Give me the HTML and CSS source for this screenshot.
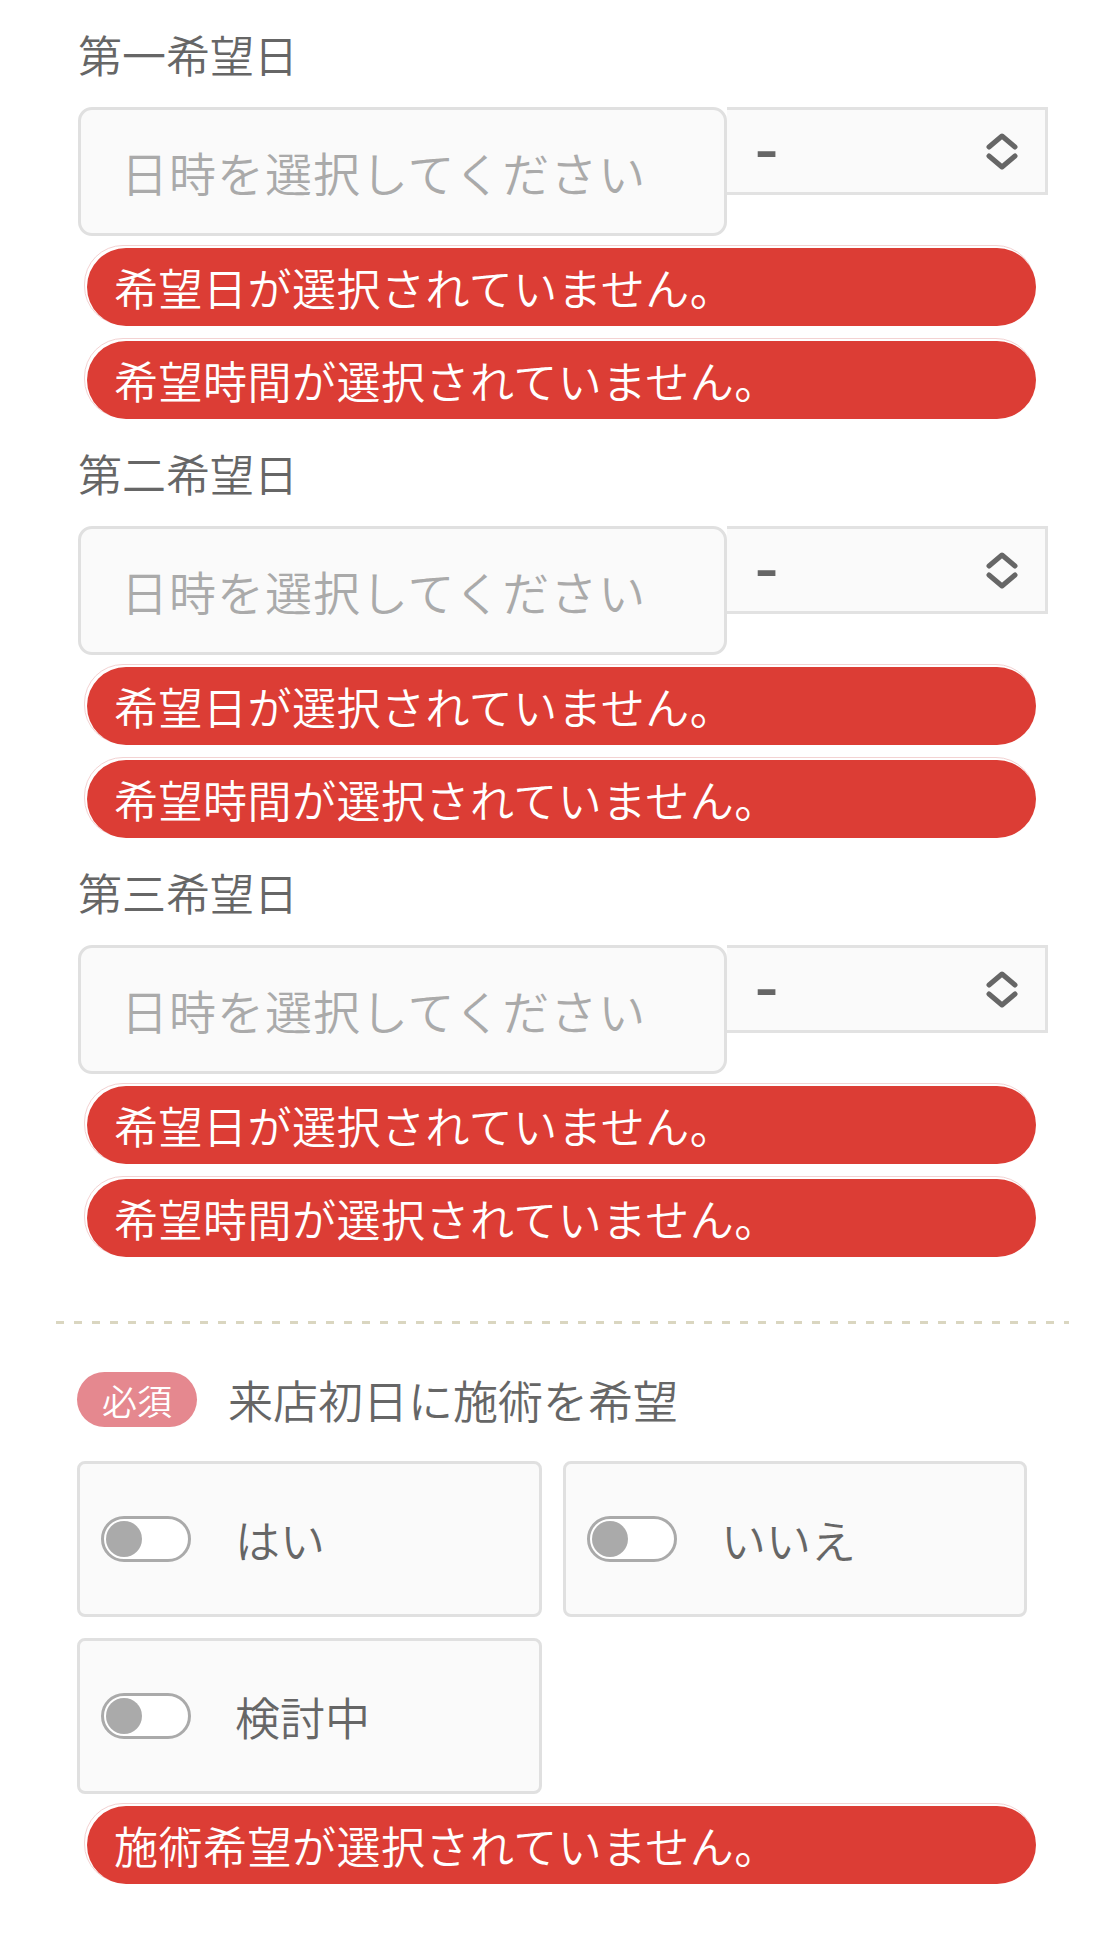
FILE: index.html
```html
<!DOCTYPE html>
<html lang="ja">
<head>
<meta charset="utf-8">
<title>希望日フォーム</title>
<link rel="stylesheet" href="styles.css">
</head>
<body>
<div class="form">
  <section class="date-field">
    <div class="field-label">第一希望日</div>
    <div class="input-row">
      <div class="date-input">日時を選択してください</div>
      <div class="time-select">
        <span class="select-value">-</span>
        <svg class="chevrons" width="32" height="37" viewBox="0 0 32 37"><path d="M3 14 L16 3 L29 14 M3 23 L16 34 L29 23" fill="none" stroke="#666" stroke-width="5" stroke-linecap="round" stroke-linejoin="round"/></svg>
      </div>
    </div>
    <div class="error-pill first">希望日が選択されていません。</div>
    <div class="error-pill">希望時間が選択されていません。</div>
  </section>

  <section class="date-field">
    <div class="field-label">第二希望日</div>
    <div class="input-row">
      <div class="date-input">日時を選択してください</div>
      <div class="time-select">
        <span class="select-value">-</span>
        <svg class="chevrons" width="32" height="37" viewBox="0 0 32 37"><path d="M3 14 L16 3 L29 14 M3 23 L16 34 L29 23" fill="none" stroke="#666" stroke-width="5" stroke-linecap="round" stroke-linejoin="round"/></svg>
      </div>
    </div>
    <div class="error-pill first">希望日が選択されていません。</div>
    <div class="error-pill">希望時間が選択されていません。</div>
  </section>

  <section class="date-field">
    <div class="field-label">第三希望日</div>
    <div class="input-row">
      <div class="date-input">日時を選択してください</div>
      <div class="time-select">
        <span class="select-value">-</span>
        <svg class="chevrons" width="32" height="37" viewBox="0 0 32 37"><path d="M3 14 L16 3 L29 14 M3 23 L16 34 L29 23" fill="none" stroke="#666" stroke-width="5" stroke-linecap="round" stroke-linejoin="round"/></svg>
      </div>
    </div>
    <div class="error-pill first">希望日が選択されていません。</div>
    <div class="error-pill">希望時間が選択されていません。</div>
  </section>

  <hr class="separator">

  <section class="choice-field">
    <div class="choice-title">
      <span class="required-badge">必須</span>
      <span class="choice-label">来店初日に施術を希望</span>
    </div>
    <div class="choice-grid">
      <div class="choice-card"><span class="toggle"><span class="knob"></span></span><span class="choice-text">はい</span></div>
      <div class="choice-card"><span class="toggle"><span class="knob"></span></span><span class="choice-text">いいえ</span></div>
      <div class="choice-card"><span class="toggle"><span class="knob"></span></span><span class="choice-text">検討中</span></div>
    </div>
    <div class="error-pill first">施術希望が選択されていません。</div>
  </section>
</div>
</body>
</html>
```

FILE: styles.css
```css
* {
  box-sizing: border-box;
}

body {
  margin: 0;
  background: #ffffff;
  font-family: "Noto Sans CJK JP", "Noto Sans", sans-serif;
  font-weight: 350;
  color: #666666;
}

.form {
  width: 1110px;
}

.date-field {
  display: flex;
  flex-direction: column;
}

.field-label {
  margin: 24px 0 23px 78px;
  font-size: 44px;
  line-height: 60px;
  color: #666666;
}

.input-row {
  display: flex;
  align-items: flex-start;
  margin-left: 78px;
}

.date-input {
  width: 649px;
  height: 129px;
  border: 3px solid #e0e0e0;
  border-radius: 14px;
  background: #fafafa;
  padding-left: 40px;
  font-size: 47px;
  line-height: 123px;
  color: #aaaaaa;
  letter-spacing: 1px;
}

.time-select {
  width: 321px;
  height: 88px;
  border: 3px solid #e2e2e2;
  border-left: none;
  background: #fafafa;
  display: flex;
  align-items: center;
  justify-content: space-between;
  padding: 0 27px 0 28px;
}

.select-value {
  display: inline-block;
  font-family: "Liberation Sans", sans-serif;
  font-weight: 700;
  font-size: 48px;
  line-height: 1;
  color: #666666;
  transform: scaleX(1.45);
  transform-origin: left center;
}

.chevrons {
  display: block;
}

.error-pill {
  position: relative;
  margin: 15px 0 0 87px;
  width: 949px;
  height: 78px;
  border-radius: 39px;
  background: #dc3d35;
  color: #ffffff;
  font-size: 44px;
  line-height: 78px;
  padding-left: 27px;
  letter-spacing: 0.5px;
}

.error-pill.first {
  margin-top: 12px;
}

.error-pill::before {
  content: "";
  position: absolute;
  left: -3px;
  top: -3px;
  width: 100%;
  height: 100%;
  border: 1px solid #f3d2d2;
  border-radius: 39px;
  z-index: -1;
}

.separator {
  margin: 64px 0 0 56px;
  width: 1013px;
  height: 3px;
  border: none;
  background: repeating-linear-gradient(90deg, #dad6c0 0 8px, transparent 8px 18px);
}

.choice-field {
  display: flex;
  flex-direction: column;
}

.choice-title {
  display: flex;
  align-items: center;
  margin: 48px 0 0 77px;
  height: 55px;
}

.required-badge {
  width: 120px;
  height: 55px;
  border-radius: 28px;
  background: #e5888f;
  color: #ffffff;
  font-size: 35px;
  line-height: 55px;
  text-align: center;
}

.choice-label {
  margin-left: 31px;
  font-size: 45px;
  line-height: 55px;
  color: #666666;
}

.choice-grid {
  display: grid;
  grid-template-columns: 465px 464px;
  gap: 21px;
  margin: 34px 0 0 77px;
}

.choice-card {
  height: 156px;
  border: 3px solid #e0e0e0;
  border-radius: 8px;
  background: #fafafa;
  display: flex;
  align-items: center;
  padding-left: 21px;
}

.toggle {
  position: relative;
  width: 90px;
  height: 46px;
  border: 3px solid #aaaaaa;
  border-radius: 23px;
  background: #ffffff;
  flex: none;
}

.knob {
  position: absolute;
  left: 2px;
  top: 2px;
  width: 36px;
  height: 36px;
  border-radius: 50%;
  background: #aaaaaa;
}

.choice-text {
  margin-left: 44px;
  font-size: 45px;
  color: #666666;
}
```
